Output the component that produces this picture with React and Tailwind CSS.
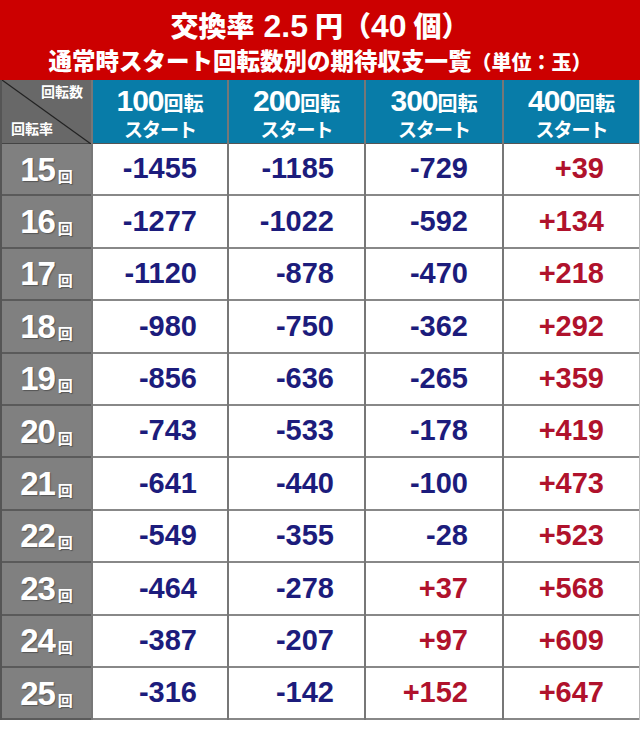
const rows = [
  [15, "-1455", "-1185", "-729", "+39"],
  [16, "-1277", "-1022", "-592", "+134"],
  [17, "-1120", "-878", "-470", "+218"],
  [18, "-980", "-750", "-362", "+292"],
  [19, "-856", "-636", "-265", "+359"],
  [20, "-743", "-533", "-178", "+419"],
  [21, "-641", "-440", "-100", "+473"],
  [22, "-549", "-355", "-28", "+523"],
  [23, "-464", "-278", "+37", "+568"],
  [24, "-387", "-207", "+97", "+609"],
  [25, "-316", "-142", "+152", "+647"],
];

const heads = ["100", "200", "300", "400"];
const colW = ["w-[136px]", "w-[137px]", "w-[138px]", "w-[137px]"];
const colPr = ["pr-[30px]", "pr-[30px]", "pr-[34px]", "pr-[35px]"];

const jp = { fontFamily: '"Noto Sans CJK JP", "Liberation Sans", sans-serif' };
const num = { fontFamily: '"Liberation Sans", Arial, sans-serif' };

export default function App() {
  return (
    <div className="w-[640px] h-[731px] bg-white" style={jp}>
      <div className="h-[80px] bg-[#cc0000] text-white font-black flex flex-col items-center justify-center leading-none">
        <div className="text-[28px] flex items-baseline mt-[3px]">
          <span>交換率</span>
          <span className="ml-[9px] text-[32px] font-bold" style={num}>2.5</span>
          <span className="ml-[7px]">円（</span>
          <span className="text-[32px] font-bold" style={num}>40</span>
          <span className="ml-[7px]">個）</span>
        </div>
        <div className="text-[23.5px] mt-[7px] flex items-baseline">
          <span>通常時スタート回転数別の期待収支一覧</span>
          <span className="text-[20px]">（単位：玉）</span>
        </div>
      </div>

      <div className="flex border-l-2 border-[#555] border-r border-r-[#bbb] w-[640px]">
        <div className="flex flex-col w-[89px] shrink-0">
          <div className="relative h-[64px] bg-[#686868] border-b border-[#444] text-white text-[14px] font-bold">
            <svg className="absolute inset-0" width="89" height="64">
              <line x1="0" y1="0" x2="89" y2="64" stroke="#222" strokeWidth="1.2" />
            </svg>
            <span className="absolute right-[8px] top-[4px] leading-none">回転数</span>
            <span className="absolute left-[9px] bottom-[8px] leading-none">回転率</span>
          </div>
          {rows.map((r) => (
            <div
              key={r[0]}
              className="h-[52.4px] bg-[#808080] border-b-2 border-[#5a5a5a] flex items-center justify-center text-white font-bold [text-shadow:1px_1px_1px_#555]"
            >
              <span className="text-[33px] leading-none tracking-[-1px]" style={num}>{r[0]}</span>
              <span className="text-[15px] leading-none ml-[3px] mt-[12px]">回</span>
            </div>
          ))}
        </div>

        {heads.map((h, i) => (
          <div key={h} className={`flex flex-col shrink-0 border-l-2 border-[#777] ${colW[i]}`}>
            <div className="h-[64px] bg-[#087ca8] border-b border-[#555] text-white font-bold flex flex-col items-center justify-center leading-none">
              <div className="flex items-baseline">
                <span className="text-[30px] tracking-[-1px]" style={num}>{h}</span>
                <span className="text-[20px]">回転</span>
              </div>
              <div className="text-[19px] mt-[3px] tracking-[-1px]">スタート</div>
            </div>
            {rows.map((r) => {
              const v = r[i + 1];
              const plus = v.startsWith("+");
              return (
                <div
                  key={r[0]}
                  className={`h-[52.4px] border-b-2 border-[#888] flex items-center justify-end ${colPr[i]} text-[29px] font-bold ${plus ? "text-[#b0122c]" : "text-[#1c1c7c]"}`}
                  style={num}
                >
                  {v}
                </div>
              );
            })}
          </div>
        ))}
      </div>
    </div>
  );
}
